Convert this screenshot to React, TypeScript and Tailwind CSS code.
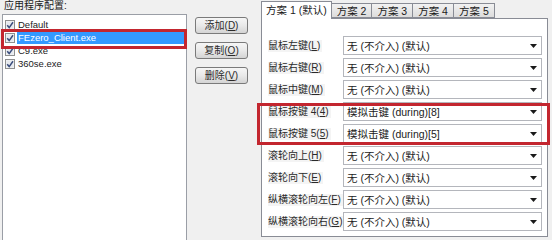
import React from 'react';

const apps = [
  { name: 'Default', selected: false },
  { name: 'FEzero_Client.exe', selected: true },
  { name: 'C9.exe', selected: false },
  { name: '360se.exe', selected: false },
];

const buttons = [
  { text: '添加', key: 'D' },
  { text: '复制', key: 'O' },
  { text: '删除', key: 'V' },
];

const tabs = ['方案 2', '方案 3', '方案 4', '方案 5'];

const DEF = '无 (不介入) (默认)';

const rows = [
  { label: '鼠标左键', key: 'L', value: DEF },
  { label: '鼠标右键', key: 'R', value: DEF },
  { label: '鼠标中键', key: 'M', value: DEF },
  { label: '鼠标按键 4', key: '4', value: '模拟击键 (during)[8]' },
  { label: '鼠标按键 5', key: '5', value: '模拟击键 (during)[5]' },
  { label: '滚轮向上', key: 'H', value: DEF },
  { label: '滚轮向下', key: 'E', value: DEF },
  { label: '纵横滚轮向左', key: 'F', value: DEF },
  { label: '纵横滚轮向右', key: 'G', value: DEF },
];

// "(X)" with the accelerator letter underlined, win32 style
const Acc = ({ k }: { k: string }) => (
  <span>
    (<span className="underline underline-offset-1">{k}</span>)
  </span>
);

const CheckBox = () => (
  <svg width="10" height="10" viewBox="0 0 10 10" className="shrink-0">
    <rect x="0.5" y="0.5" width="9" height="9" fill="#f4f4f4" stroke="#8e8f8f" />
    <rect x="1.5" y="1.5" width="7" height="7" fill="#e6e9ee" />
    <path d="M2.2 5.2 L4.2 7.6 L8 2.2" fill="none" stroke="#3a4d7c" strokeWidth="1.5" />
  </svg>
);

const ComboArrow = () => (
  <svg width="7" height="4" viewBox="0 0 7 4">
    <path d="M0 0 H7 L3.5 4 Z" fill="#1a1a1a" />
  </svg>
);

export default function App() {
  return (
    <div className="relative w-[552px] h-[240px] overflow-hidden bg-[#f0f0f0] text-[#1b1b1b] font-['Liberation_Sans','Noto_Sans_CJK_SC',sans-serif]">
      <div className="flex">
        {/* application list */}
        <div className="flex flex-col pl-[2px] w-[188px]">
          <div className="h-[11px] pl-[2px] text-[10px] leading-[11px]">应用程序配置:</div>
          <div className="mt-[3px] w-[185px] h-[240px] border border-[#9a9ea6] bg-white pt-[3px]">
            {apps.map((a) => (
              <div key={a.name} className="flex items-center h-[13px] pl-[2px] pr-[2px] gap-[2px]">
                <CheckBox />
                <span
                  className={
                    'flex-1 h-[13px] pl-[1px] text-[9.5px] leading-[13px] ' +
                    (a.selected ? 'bg-[#3399ff] text-white' : '')
                  }
                >
                  {a.name}
                </span>
              </div>
            ))}
          </div>
        </div>

        {/* buttons */}
        <div className="flex flex-col gap-[8px] pt-[17px] ml-[7px]">
          {buttons.map((b) => (
            <div
              key={b.text}
              className="flex items-center justify-center w-[53px] h-[17px] rounded-[3px] border border-[#7a7a7a] bg-linear-to-b from-[#f6f6f6] via-[#e9e9e9] to-[#d4d4d4] text-[10px] leading-[12px] text-[#2a2a2a]"
            >
              {b.text}
              <Acc k={b.key} />
            </div>
          ))}
        </div>

        {/* tab control */}
        <div className="flex flex-col ml-[13px] w-[287px]">
          <div className="flex items-end h-[18px] text-[10.5px] leading-[12px]">
            <div className="relative z-10 flex items-center h-[18px] -mb-px px-[4px] pb-[2px] border border-b-0 border-[#898c95] bg-white">
              方案 1 (默认)
            </div>
            {tabs.map((t) => (
              <div
                key={t}
                className="flex items-center h-[15px] px-[5px] border border-l-0 border-[#898c95] bg-linear-to-b from-[#f2f2f2] to-[#dcdcdc]"
              >
                {t}
              </div>
            ))}
          </div>
          <div className="flex flex-col gap-[3px] h-[219px] border border-[#898c95] bg-white pt-[17px] pl-[6px] pr-[4px]">
            {rows.map((r) => (
              <div key={r.label} className="flex items-center h-[19px]">
                <div className="w-[75px] text-[10px] leading-[12px]">
                  <span className="inline-block pr-[2px] bg-[#f4f4f4] text-[#2a2a2a] whitespace-nowrap">
                    {r.label}
                    <Acc k={r.key} />
                  </span>
                </div>
                <div className="flex items-center justify-between w-[199px] h-[19px] border border-[#b4b6bc] bg-white pl-[3px] pr-[4px] text-[10.5px] leading-[12px]">
                  <span className="whitespace-nowrap">{r.value}</span>
                  <ComboArrow />
                </div>
              </div>
            ))}
          </div>
        </div>
      </div>

      {/* red highlight annotations */}
      <div className="absolute left-[1px] top-[29px] w-[186px] h-[20px] border-[3px] border-[#c3262f]" />
      <div className="absolute left-[257px] top-[103px] w-[293px] h-[42px] border-[3px] border-[#c3262f]" />
    </div>
  );
}
